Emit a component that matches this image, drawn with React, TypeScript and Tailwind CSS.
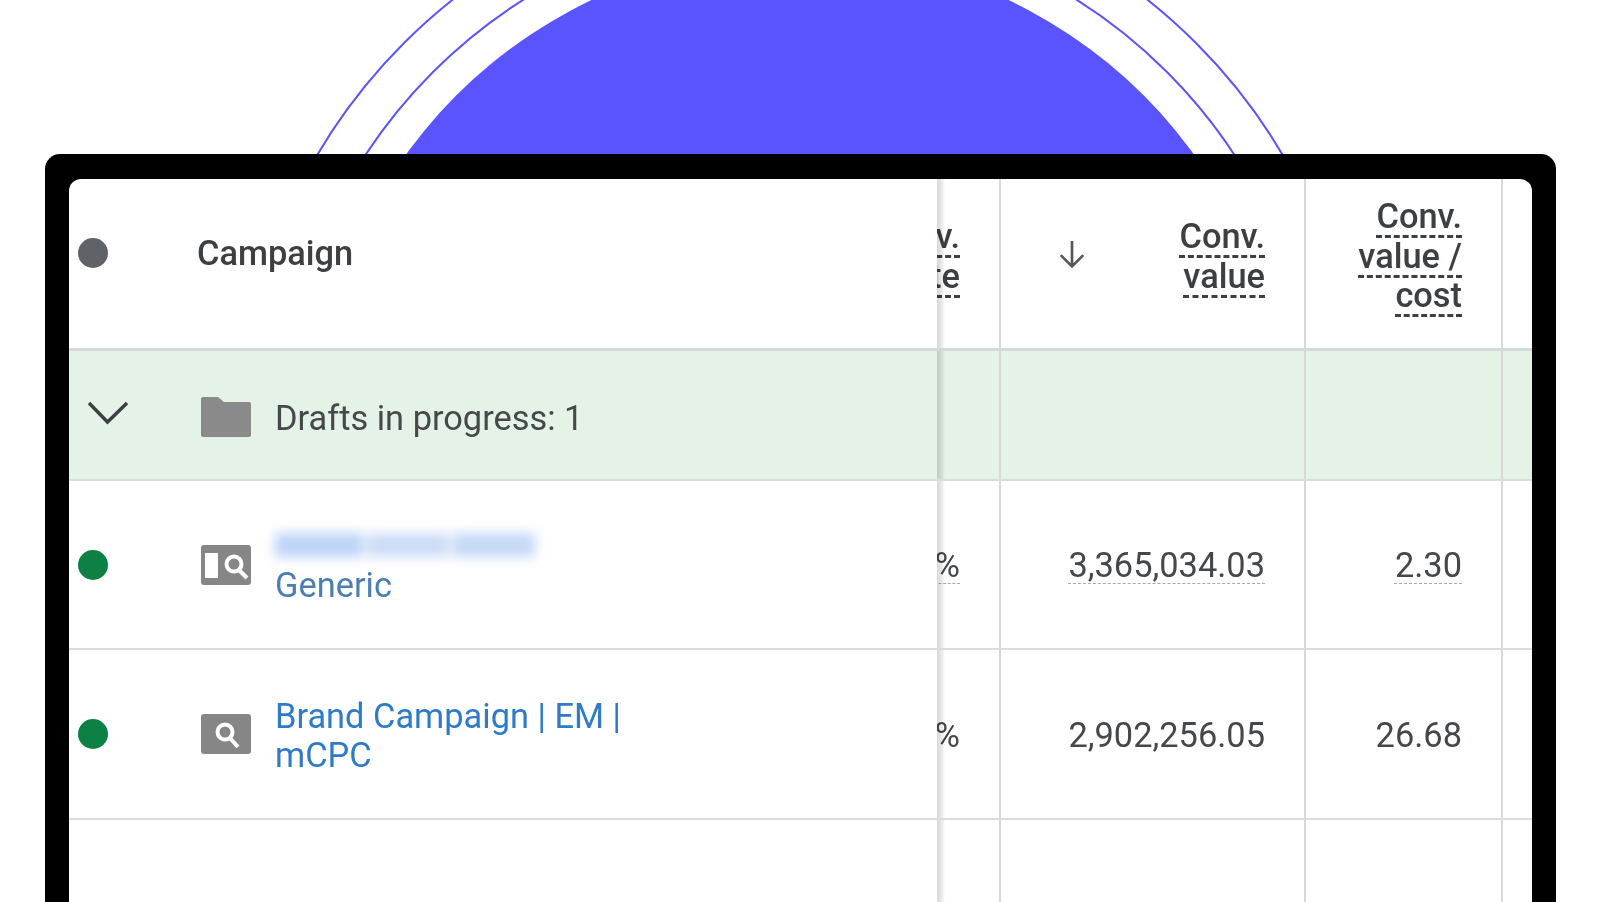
import { ReactNode } from "react"

const font = "font-['Roboto',sans-serif]"

function Dot({ color, className = "" }: { color: string; className?: string }) {
  return <div className={`size-[30px] shrink-0 rounded-full ${color} ${className}`} />
}

function FolderIcon() {
  return (
    <svg width="50" height="40" viewBox="0 0 50 40" className="shrink-0">
      <path d="M2 0h15l6 5h25a2 2 0 0 1 2 2v31a2 2 0 0 1-2 2H2a2 2 0 0 1-2-2V2a2 2 0 0 1 2-2z" fill="#8a8a8a" />
    </svg>
  )
}

function SearchIcon({ panel }: { panel?: boolean }) {
  return (
    <svg width="50" height="40" viewBox="0 0 50 40" className="shrink-0">
      <rect width="50" height="40" rx="3" fill="#868686" />
      {panel && <rect x="4" y="8" width="13" height="25" fill="#fff" />}
      <circle cx={panel ? 33 : 24} cy={panel ? 19 : 18} r="7.5" fill="none" stroke="#fff" strokeWidth="4" />
      <path d={panel ? "M38 25l8 8" : "M29 24l8 9"} stroke="#fff" strokeWidth="4" />
    </svg>
  )
}

function Cell({ children, last, shadow, spread, className = "" }: { children?: ReactNode; last?: boolean; shadow?: boolean; spread?: boolean; className?: string }) {
  return (
    <div className={`relative flex min-w-0 items-center overflow-hidden pr-[39px] whitespace-nowrap ${spread ? "justify-between" : "justify-end"} ${last ? "" : "border-r-2 border-[#d8d8d8]"} ${className}`}>
      {children}
      {shadow && <div className="absolute inset-y-0 left-0 w-[8px] bg-gradient-to-r from-black/15 via-black/10 to-transparent" />}
    </div>
  )
}

function HeadText({ children }: { children: ReactNode }) {
  return (
    <div className="text-right text-[34.4px] leading-[39.5px] font-medium text-[#3c4043]">
      <span className="underline decoration-[#3c4043] decoration-dashed decoration-[3px] underline-offset-[7px]">{children}</span>
    </div>
  )
}

function Value({ children, dashed, className = "" }: { children: ReactNode; dashed?: boolean; className?: string }) {
  return (
    <span className={`text-[34.4px] text-[#45484b] ${dashed ? "underline decoration-[#a8a8a8] decoration-dashed decoration-1 underline-offset-[6px]" : ""} ${className}`}>
      {children}
    </span>
  )
}

const cols = "grid grid-cols-[868px_64px_305px_197px_1fr]"

export default function App() {
  return (
    <div className={`relative h-[902px] w-[1600px] overflow-hidden bg-white pt-[154px] pr-[44px] pl-[45px] ${font}`}>
      <div className="absolute top-[-122px] left-[239px] size-[1122px] rounded-full border-2 border-[#5a54ff]" />
      <div className="absolute top-[-81px] left-[280px] size-[1040px] rounded-full border-2 border-[#5a54ff]" />
      <div className="absolute top-[-47px] left-[314px] size-[972px] rounded-full bg-[#5a54ff]" />

      <div className="relative h-full rounded-t-[15px] bg-black px-6 pt-[25px]">
        <div className="h-full overflow-hidden rounded-t-[12px] bg-white">
          <div className="h-full blur-[0.5px]">
            {/* header */}
            <div className={`${cols} h-[172px] border-b-[3px] border-[#d3dbd6]`}>
              <div className="flex items-center pb-5 pl-[9px]">
                <Dot color="bg-[#5f6368]" className="mb-[2px]" />
                <span className="ml-[89px] text-[34.4px] font-medium text-[#3c4043]">Campaign</span>
              </div>
              <Cell shadow className="pb-[14px]">
                <HeadText>Conv.<br />rate</HeadText>
              </Cell>
              <Cell spread className="pb-[14px] pl-[57px]">
                <svg width="28" height="28" viewBox="0 0 26 26" fill="none" stroke="#55595d" strokeWidth="2.5" className="mb-[6px] shrink-0">
                  <path d="M13 1v23M2.5 14L13 24.5 23.5 14" />
                </svg>
                <HeadText>Conv.<br />value</HeadText>
              </Cell>
              <Cell className="pb-[14px]">
                <HeadText>Conv.<br />value /<br />cost</HeadText>
              </Cell>
              <Cell last />
            </div>

            {/* drafts */}
            <div className={`${cols} h-[130px] border-b-2 border-[#d8dfda] bg-[#e5f2e7]`}>
              <div className="flex items-center text-[34.4px] text-[#45494a]">
                <svg width="40" height="24" viewBox="0 0 40 24" fill="none" stroke="#3c4043" strokeWidth="3.4" className="mb-[4px] ml-[19px] shrink-0">
                  <path d="M1 2l18.5 19L39 2" />
                </svg>
                <div className="mt-1 ml-[73px]"><FolderIcon /></div>
                <span className="mt-[8px] ml-[24px]">Drafts in progress: 1</span>
              </div>
              <Cell shadow />
              <Cell />
              <Cell />
              <Cell last />
            </div>

            {/* rows */}
            <div className={`${cols} h-[169px] border-b-2 border-[#dcdcdc]`}>
              <div className="flex items-center pl-[9px]">
                <Dot color="bg-[#0d8043]" />
                <div className="ml-[93px]"><SearchIcon panel /></div>
                <div className="ml-[24px] text-[34.4px] leading-[40px] text-[#4a7fb5]">
                  <div className="flex h-[40px] items-center gap-1 blur-[6px]">
                    <div className="h-[24px] w-[88px] bg-[#bdd3f7]" />
                    <div className="h-[24px] w-[82px] bg-[#cbdcf7]" />
                    <div className="h-[24px] w-[82px] bg-[#c4d8f7]" />
                  </div>
                  <div>Generic</div>
                </div>
              </div>
              <Cell shadow><Value dashed className="mt-[2px]">%</Value></Cell>
              <Cell><Value dashed className="mt-[2px]">3,365,034.03</Value></Cell>
              <Cell><Value dashed className="mt-[2px]">2.30</Value></Cell>
              <Cell last />
            </div>
            <div className={`${cols} h-[170px] border-b-2 border-[#dcdcdc]`}>
              <div className="flex items-center pl-[9px]">
                <Dot color="bg-[#0d8043]" />
                <div className="ml-[93px]"><SearchIcon /></div>
                <div className="mt-[4px] ml-[24px] text-[34.4px] leading-[39px] text-[#2f7bc9]">
                  Brand Campaign | EM |<br />mCPC
                </div>
              </div>
              <Cell shadow><Value className="mt-[3px]">%</Value></Cell>
              <Cell><Value className="mt-[3px]">2,902,256.05</Value></Cell>
              <Cell><Value className="mt-[3px]">26.68</Value></Cell>
              <Cell last />
            </div>
            <div className={`${cols} h-[100px]`}>
              <div />
              <Cell shadow />
              <Cell />
              <Cell />
              <Cell last />
            </div>
          </div>
        </div>
      </div>
    </div>
  )
}
